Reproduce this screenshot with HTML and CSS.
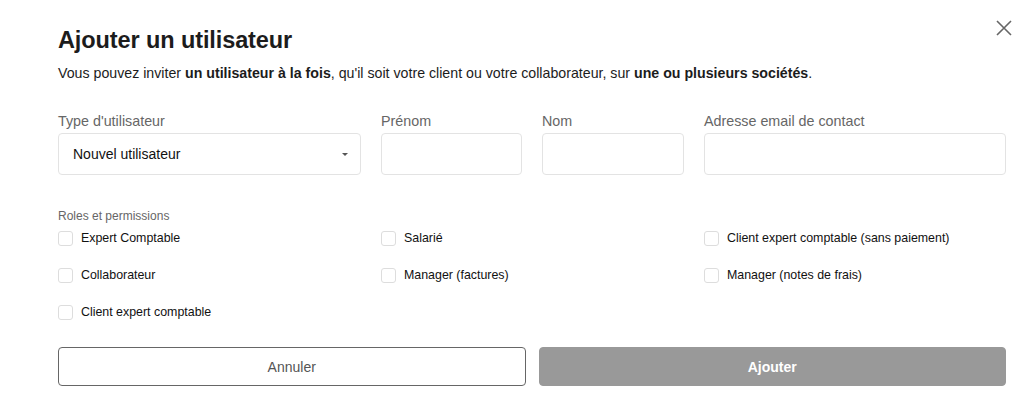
FILE: index.html
```html
<!DOCTYPE html>
<html lang="fr">
<head>
  <meta charset="UTF-8" />
  <title>Ajouter un utilisateur</title>
  <link rel="stylesheet" href="styles.css">
</head>
<body>
  <div class="modal">
    <button class="close" aria-label="Fermer">
      <svg width="16" height="16" viewBox="0 0 16 16"><path d="M1 1L15 15M15 1L1 15" stroke="#666" stroke-width="1.6" fill="none"/></svg>
    </button>
    <h2>Ajouter un utilisateur</h2>
    <p class="intro">Vous pouvez inviter <b>un utilisateur à la fois</b>, qu'il soit votre client ou votre collaborateur, sur <b>une ou plusieurs sociétés</b>.</p>

    <div class="fields">
      <div class="field">
        <label>Type d'utilisateur</label>
        <div class="select">Nouvel utilisateur <span class="caret"></span></div>
      </div>
      <div class="field">
        <label>Prénom</label>
        <input type="text" />
      </div>
      <div class="field">
        <label>Nom</label>
        <input type="text" />
      </div>
      <div class="field">
        <label>Adresse email de contact</label>
        <input type="email" />
      </div>
    </div>

    <div class="roles-title">Roles et permissions</div>
    <div class="roles">
      <label class="check"><span class="box"></span>Expert Comptable</label>
      <label class="check"><span class="box"></span>Salarié</label>
      <label class="check"><span class="box"></span>Client expert comptable (sans paiement)</label>
      <label class="check"><span class="box"></span>Collaborateur</label>
      <label class="check"><span class="box"></span>Manager (factures)</label>
      <label class="check"><span class="box"></span>Manager (notes de frais)</label>
      <label class="check"><span class="box"></span>Client expert comptable</label>
    </div>

    <div class="actions">
      <button class="btn cancel">Annuler</button>
      <button class="btn submit">Ajouter</button>
    </div>
  </div>
</body>
</html>
```

FILE: styles.css
```css
body { margin: 0; background: white; font-family: "Liberation Sans", Arial, sans-serif; color: #1a1a1a; }
.modal { position: relative; padding: 27px 26px 0 58px; width: 948px; }
.close { position: absolute; top: 20px; right: 20px; background: none; border: 0; padding: 0; cursor: pointer; }
h2 { margin: 0; font-size: 23.5px; font-weight: 600; color: #1c1c1c; letter-spacing: -0.1px; }
.intro { margin: 11px 0 0; font-size: 14.2px; color: #1c1c1c; }
.intro b { font-weight: 700; }

.fields { display: grid; grid-template-columns: 303fr 141fr 142fr 302fr; column-gap: 20px; margin-top: 32px; }
.field label { display: block; font-size: 14.3px; color: #666; margin-bottom: 4px; }
.field input, .select { box-sizing: border-box; width: 100%; height: 42px; border: 1px solid #e3e3e3; border-radius: 4px; font: inherit; }
.select { display: flex; align-items: center; justify-content: space-between; padding: 0 14px; font-size: 14px; color: #111; }
.caret { border-left: 3px solid transparent; border-right: 3px solid transparent; border-top: 3px solid #555; margin-right: -2px; }

.roles-title { margin-top: 34px; font-size: 12px; color: #666; }
.roles { display: grid; grid-template-columns: 303fr 303fr 302fr; column-gap: 20px; row-gap: 21px; margin-top: 7px; }
.check { display: flex; align-items: center; gap: 8px; font-size: 12.4px; color: #111; height: 16px; }
.box { width: 13px; height: 13px; border: 1px solid #ddd; border-radius: 3px; }

.actions { display: grid; grid-template-columns: 1fr 1fr; column-gap: 13px; margin-top: 27px; }
.btn { height: 39px; border-radius: 4px; font: inherit; font-size: 14px; }
.cancel { background: white; border: 1px solid #666; color: #555; }
.submit { background: #999; border: 1px solid #999; color: white; font-weight: 700; }
```
